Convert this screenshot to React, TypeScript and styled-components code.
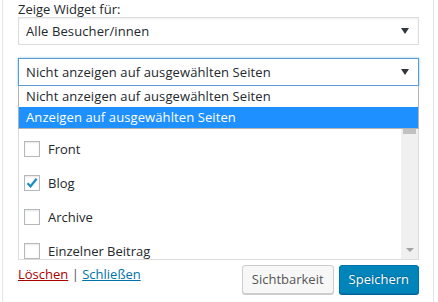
import React from "react";
import styled, { createGlobalStyle } from "styled-components";

const GlobalStyle = createGlobalStyle`
  html, body {
    margin: 0;
    padding: 0;
    background: #fff;
  }
  body {
    font-family: "Open Sans", "Noto Sans", sans-serif;
    font-size: 13px;
    color: #23282d;
  }
`;

const Page = styled.div`
  padding-left: 2px;
  width: 438px;
  height: 302px;
  box-sizing: border-box;
  overflow: hidden;
`;

const Panel = styled.div`
  width: 432px;
  height: 310px;
  box-sizing: border-box;
  border-left: 1px solid #e5e5e5;
  border-right: 1px solid #e5e5e5;
  padding: 0 14px 0 15px;
`;

const Label = styled.div`
  line-height: 18px;
  margin-bottom: -1px;
`;

const Field = styled.div`
  position: relative;
`;

const SelectBox = styled.div<{ $focused?: boolean }>`
  height: 28px;
  box-sizing: border-box;
  border: 1px solid ${(p) => (p.$focused ? "#5b9dd9" : "#ddd")};
  box-shadow: ${(p) =>
    p.$focused ? "0 0 2px rgba(30,140,190,.6)" : "inset 0 1px 2px rgba(0,0,0,.07)"};
  display: flex;
  align-items: center;
  justify-content: space-between;
  padding: 0 9px 0 7px;
  margin-bottom: 13px;
  background: #fff;
  letter-spacing: 0.1px;
`;

const Caret = styled.span`
  width: 0;
  height: 0;
  border-left: 4px solid transparent;
  border-right: 4px solid transparent;
  border-top: 6px solid #32373c;
`;

const DropList = styled.div`
  position: absolute;
  left: 0;
  right: 0;
  top: 28px;
  z-index: 2;
  background: #fff;
  border: 1px solid #b4b4b4;
  border-top: none;
  letter-spacing: 0.1px;
`;

const Option = styled.div<{ $active?: boolean }>`
  height: 21px;
  line-height: 21px;
  padding-left: 7px;
  background: ${(p) => (p.$active ? "#1e90ff" : "#fff")};
  color: ${(p) => (p.$active ? "#fff" : "#23282d")};
`;

const ListBox = styled.div`
  position: relative;
  margin-top: -4px;
  height: 165px;
  box-sizing: border-box;
  border: 1px solid #ddd;
  overflow: hidden;
  display: flex;
`;

const Items = styled.div`
  flex: 1;
  padding: 36px 0 0 5px;
`;

const Item = styled.label`
  display: flex;
  align-items: center;
  height: 34px;
  gap: 8px;
`;

const Box = styled.span`
  width: 16px;
  height: 16px;
  box-sizing: border-box;
  border: 1px solid #b4b9be;
  box-shadow: inset 0 1px 2px rgba(0, 0, 0, 0.1);
  display: flex;
  align-items: center;
  justify-content: center;
  background: #fff;
`;

const ScrollTrack = styled.div`
  width: 17px;
  background: #f0f0f0;
  position: relative;
`;

const Thumb = styled.div`
  position: absolute;
  left: 2px;
  right: 2px;
  top: 30px;
  height: 8px;
  background: #c1c1c1;
`;

const DownArrow = styled.span`
  position: absolute;
  left: 5px;
  bottom: 7px;
  width: 0;
  height: 0;
  border-left: 4px solid transparent;
  border-right: 4px solid transparent;
  border-top: 4px solid #a3a3a3;
`;

const Footer = styled.div`
  display: flex;
  justify-content: space-between;
  align-items: flex-start;
  margin-top: 5px;
`;

const Links = styled.div`
  line-height: 18px;
  color: #555;
`;

const Link = styled.a<{ $danger?: boolean }>`
  color: ${(p) => (p.$danger ? "#a00" : "#0073aa")};
  text-decoration: underline;
`;

const Buttons = styled.div`
  display: flex;
  gap: 5px;
`;

const Button = styled.button<{ $primary?: boolean }>`
  font-family: inherit;
  font-size: 13px;
  height: 29px;
  box-sizing: border-box;
  padding: 0 9px 1px;
  border-radius: 3px;
  border: 1px solid ${(p) => (p.$primary ? "#0073aa" : "#ccc")};
  background: ${(p) => (p.$primary ? "#0085ba" : "#f7f7f7")};
  color: ${(p) => (p.$primary ? "#fff" : "#555")};
  box-shadow: 0 1px 0 ${(p) => (p.$primary ? "#006799" : "#ccc")};
  text-shadow: ${(p) =>
    p.$primary ? "0 -1px 1px #006799, 1px 0 1px #006799" : "none"};
`;

const pages = [
  { name: "Front", checked: false },
  { name: "Blog", checked: true },
  { name: "Archive", checked: false },
  { name: "Einzelner Beitrag", checked: false },
];

export default function App() {
  return (
    <Page>
      <GlobalStyle />
      <Panel>
        <Label>Zeige Widget für:</Label>
        <SelectBox>
          <span>Alle Besucher/innen</span>
          <Caret />
        </SelectBox>
        <Field>
          <SelectBox $focused>
            <span>Nicht anzeigen auf ausgewählten Seiten</span>
            <Caret />
          </SelectBox>
          <DropList>
            <Option>Nicht anzeigen auf ausgewählten Seiten</Option>
            <Option $active>Anzeigen auf ausgewählten Seiten</Option>
          </DropList>
        </Field>
        <ListBox>
          <Items>
            {pages.map((p) => (
              <Item key={p.name}>
                <Box>
                  {p.checked && (
                    <svg width="14" height="14" viewBox="0 0 14 14">
                      <path
                        d="M2.5 7.2 L5.6 10.3 L11.6 2.8"
                        fill="none"
                        stroke="#1e8cbe"
                        strokeWidth="2.2"
                      />
                    </svg>
                  )}
                </Box>
                {p.name}
              </Item>
            ))}
          </Items>
          <ScrollTrack>
            <Thumb />
            <DownArrow />
          </ScrollTrack>
        </ListBox>
        <Footer>
          <Links>
            <Link $danger>Löschen</Link> | <Link>Schließen</Link>
          </Links>
          <Buttons>
            <Button>Sichtbarkeit</Button>
            <Button $primary>Speichern</Button>
          </Buttons>
        </Footer>
      </Panel>
    </Page>
  );
}
